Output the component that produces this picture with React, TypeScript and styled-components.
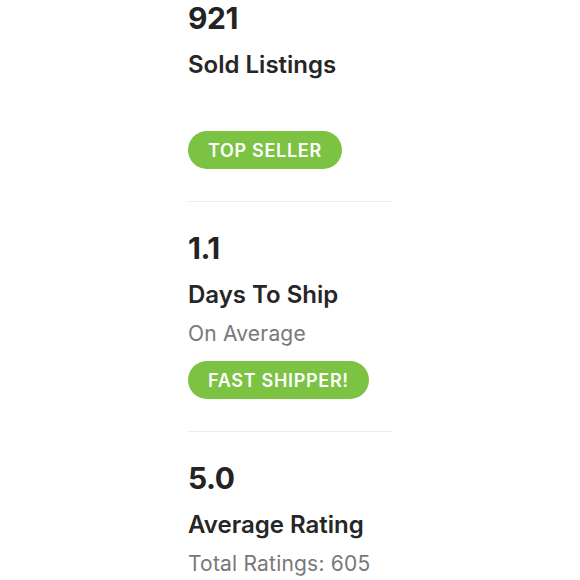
import React from "react";
import styled, {createGlobalStyle} from "styled-components";

const GlobalStyle = createGlobalStyle`
  html, body {
    margin: 0;
    padding: 0;
    background: #ffffff;
  }

  body {
    font-family: Inter, Lato, sans-serif;
  }
`

type Stat = { value: string, label: string, sub?: string, badge?: string }

const stats: Stat[] = [
    {value: "921", label: "Sold Listings", badge: "TOP SELLER"},
    {value: "1.1", label: "Days To Ship", sub: "On Average", badge: "FAST SHIPPER!"},
    {value: "5.0", label: "Average Rating", sub: "Total Ratings: 605"},
];

export default function App() {
    return (<>
            <GlobalStyle/>
            <StatsColumn>
                {stats.map((s, i) => (
                    <React.Fragment key={s.label}>
                        {i > 0 && <Divider/>}
                        <StatBlock $first={i === 0}>
                            <StatValue>{s.value}</StatValue>
                            <StatLabel>{s.label}</StatLabel>
                            <StatSub>{s.sub}</StatSub>
                            {s.badge && <Badge>{s.badge}</Badge>}
                        </StatBlock>
                    </React.Fragment>
                ))}
            </StatsColumn>
        </>
    );
}

const StatsColumn = styled.div`
  display: flex;
  flex-direction: column;
  width: 204px;
  margin-left: 188px;
`

const StatBlock = styled.div<{ $first: boolean }>`
  display: flex;
  flex-direction: column;
  align-items: flex-start;
  padding-top: ${p => p.$first ? 0 : 28}px;
  padding-bottom: 32px;
`

const StatValue = styled.div`
  font-size: 30px;
  line-height: 36px;
  font-weight: 700;
  color: #232323;
  letter-spacing: -0.5px;
`

const StatLabel = styled.div`
  margin-top: 14px;
  font-size: 24px;
  line-height: 30px;
  font-weight: 600;
  color: #262626;
  white-space: nowrap;
`

const StatSub = styled.div`
  margin-top: 11px;
  min-height: 26px;
  font-size: 21px;
  line-height: 26px;
  letter-spacing: 0.2px;
  color: #787878;
  white-space: nowrap;
`

const Badge = styled.span`
  margin-top: 14px;
  display: inline-flex;
  align-items: center;
  height: 38px;
  padding: 0 20px;
  border-radius: 19px;
  background-color: #7cc243;
  color: #ffffff;
  font-size: 18px;
  font-weight: 600;
  letter-spacing: 0.7px;
`

const Divider = styled.hr`
  margin: 0;
  border: none;
  height: 1px;
  background-color: #ececec;
`
